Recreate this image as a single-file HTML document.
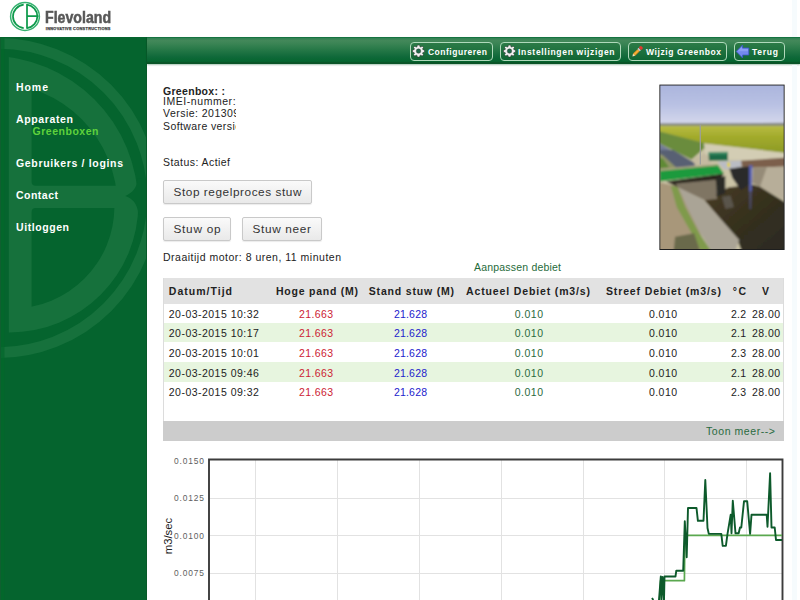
<!DOCTYPE html>
<html lang="nl">
<head>
<meta charset="utf-8">
<title>Flevoland Innovative Constructions - Greenbox</title>
<style>
html,body{margin:0;padding:0;}
body{width:800px;height:600px;overflow:hidden;background:#fff;position:relative;font-family:"Liberation Sans",sans-serif;}
.abs{position:absolute;}
.t{z-index:1;position:absolute;white-space:pre;line-height:14px;font-family:"Liberation Sans",sans-serif;}
#side{left:0;top:37px;width:147px;height:563px;background:#05642e;overflow:hidden;}
#side:after{content:"";position:absolute;right:0;top:0;width:1px;height:100%;background:#075a29;}
#bar{left:147px;top:37px;width:653px;height:27.2px;background:linear-gradient(#2f8152 0%,#43885a 10%,#3a8454 22%,#267847 45%,#10693a 72%,#05652f 90%,#0a5528 94%,#0a5528 100%);border-top:1px solid #167341;box-sizing:border-box;box-shadow:0 1px 1.5px rgba(10,85,40,.35);}
.tb{position:absolute;top:41.5px;height:19.5px;box-sizing:border-box;border:1px solid #b0d9bb;border-radius:4px;background:linear-gradient(#2c7b47,#0f6634);}
.btn{position:absolute;box-sizing:border-box;border:1px solid #c9c9c9;border-radius:2px;background:linear-gradient(#fafafa,#e9e9e9);box-shadow:0 1px 1px rgba(0,0,0,.08);}
#thead{left:163px;top:277.5px;width:621.3px;height:26px;background:#e2e2e2;}
.row{position:absolute;left:164px;width:620px;height:19.6px;}
.alt{background:#e7f5df;}
#tbox{left:163px;top:278px;width:621px;height:163px;box-sizing:border-box;border-left:1px solid #dcdcdc;border-right:1px solid #dcdcdc;}
#tfoot{left:163px;top:421px;width:621px;height:20px;background:#cccccc;}
#ylab{left:168px;top:536px;width:0;height:0;}
#ylab span{position:absolute;white-space:pre;font-size:11.3px;color:#222;transform:translate(-50%,-50%) rotate(-90deg);line-height:14px;}
</style>
</head>
<body>
<!-- header logo -->
<svg class="abs" style="left:0;top:0" width="120" height="37" viewBox="0 0 120 37">
<ellipse cx="25" cy="16.4" rx="14.4" ry="14" fill="none" stroke="#35b270" stroke-width="1.5"/>
<g fill="none" stroke="#0e9a4c" stroke-width="1.75">
<path d="M23.7 4.6A12.3 11.9 0 0 0 23.7 28.2"/>
<path d="M27 4.65A12.3 11.9 0 0 1 27 28.15"/>
<path d="M27 4.1V28.7M27 16.2H38.4"/>
</g>
</svg>
<span class="t" id="flevo" style="left:45.4px;top:9px;font-size:15.6px;font-weight:700;color:#585858;line-height:18px;transform-origin:0 0;transform:scaleX(.908);-webkit-text-stroke:.5px #585858">Flevoland</span>

<!-- sidebar -->
<div id="side" class="abs">
<svg class="abs" style="left:0;top:0" width="147" height="563" viewBox="0 37 147 563">
<defs>
<clipPath id="cu"><rect x="8.8" y="0" width="200" height="196"/></clipPath>
<clipPath id="cl"><rect x="8.8" y="196" width="200" height="400"/></clipPath>
<clipPath id="cuc"><rect x="31.6" y="60" width="200" height="125.8" rx="4"/></clipPath>
<clipPath id="clc"><rect x="31.6" y="208" width="200" height="125" rx="4"/></clipPath>
</defs>
<circle cx="-2" cy="198" r="154.6" fill="none" stroke="#16713c" stroke-width="10.8"/>
<circle cx="-10.6" cy="204.6" r="148.7" fill="#16713c" clip-path="url(#cu)"/>
<circle cx="9.6" cy="203.7" r="128.8" fill="#16713c" clip-path="url(#cl)"/>
<path d="M141.5 178 L137.4 179 C137.3 188 132 193 125.3 196 C132 198.6 137.6 203 138.2 214 L141.5 215Z" fill="#05642e"/>
<circle cx="-4.9" cy="205.4" r="122.2" fill="#05642e" clip-path="url(#cuc)"/>
<circle cx="12.3" cy="206.4" r="102.1" fill="#05642e" clip-path="url(#clc)"/>
<rect x="0" y="37" width="1" height="563" fill="#0f5f30"/><rect x="1" y="37" width="3.5" height="563" fill="#03682b" opacity=".7"/>
</svg>
</div>
<!-- toolbar -->
<div id="bar" class="abs"></div>
<div class="tb" style="left:409.5px;width:83.5px"></div>
<div class="tb" style="left:500px;width:121px"></div>
<div class="tb" style="left:627.5px;width:99.5px"></div>
<div class="tb" style="left:734px;width:50.5px"></div>
<svg class="abs" style="left:400px;top:38px" width="400" height="27" viewBox="400 38 400 27">
<g transform="translate(418.5 51.1)">
<g fill="#f1f1f1" stroke="#2b2b2b" stroke-width=".5" stroke-linejoin="round">
<path d="M-1.1-6 1.1-6 1.45-4.4 2.35-4 3.65-4.95 5-3.6 4.05-2.3 4.4-1.45 6-1.1 6 1.1 4.4 1.45 4.05 2.3 5 3.6 3.65 4.95 2.35 4.05 1.45 4.4 1.1 6-1.1 6-1.45 4.4-2.35 4.05-3.65 4.95-5 3.6-4.05 2.3-4.4 1.45-6 1.1-6-1.1-4.4-1.45-4.05-2.3-5-3.6-3.65-4.95-2.35-4-1.45-4.4Z"/>
</g>
<circle r="2.25" fill="#1d6a48" stroke="#2b2b2b" stroke-width=".4"/>
</g>
<g transform="translate(509.5 51.1)">
<g fill="#f1f1f1" stroke="#2b2b2b" stroke-width=".5" stroke-linejoin="round">
<path d="M-1.1-6 1.1-6 1.45-4.4 2.35-4 3.65-4.95 5-3.6 4.05-2.3 4.4-1.45 6-1.1 6 1.1 4.4 1.45 4.05 2.3 5 3.6 3.65 4.95 2.35 4.05 1.45 4.4 1.1 6-1.1 6-1.45 4.4-2.35 4.05-3.65 4.95-5 3.6-4.05 2.3-4.4 1.45-6 1.1-6-1.1-4.4-1.45-4.05-2.3-5-3.6-3.65-4.95-2.35-4-1.45-4.4Z"/>
</g>
<circle r="2.25" fill="#1d6a48" stroke="#2b2b2b" stroke-width=".4"/>
</g>
<!-- pencil -->
<g transform="translate(632.3 56.5) rotate(-45)">
<path d="M0 0L2.6-1.5V1.5Z" fill="#f3e2b8"/>
<path d="M0 0L.9-.5V.5Z" fill="#444"/>
<rect x="2.6" y="-1.5" width="6.3" height="3" fill="#e8931f"/>
<rect x="2.6" y="-.5" width="6.3" height="1" fill="#f5b946"/>
<rect x="8.9" y="-1.6" width="1.7" height="3.2" fill="#c9c9c9"/>
<rect x="10.6" y="-1.9" width="3.2" height="3.8" rx="1.5" fill="#e0382e"/>
</g>
<!-- arrow -->
<path d="M736.2 51.5L742.6 45V48H748.8V55H742.6V58Z" fill="#7389ee" stroke="#3c58c8" stroke-width=".8" stroke-linejoin="round"/>
<path d="M737.6 51.3L742 47V49H748V51.3Z" fill="#93a7f7" opacity=".7"/>
</svg>

<div class="abs" id="cover" style="left:235.8px;top:80px;width:120px;height:56px;background:#fff;z-index:5"></div>
<div class="abs" style="left:792px;top:0;width:5px;height:37px;background:#f6fbfd"></div><div class="abs" style="left:792px;top:65px;width:5px;height:535px;background:#f6fbfd"></div>
<!-- buttons -->
<div class="btn" style="left:163px;top:180px;width:149px;height:24px"></div>
<div class="btn" style="left:163px;top:217px;width:68px;height:24px"></div>
<div class="btn" style="left:242px;top:217px;width:80px;height:24px"></div>
<!-- table -->
<div id="thead" class="abs"></div>
<div class="row alt" style="top:322.8px"></div>
<div class="row alt" style="top:362px"></div>
<div id="tbox" class="abs"></div>
<div id="tfoot" class="abs"></div>
<!-- photo -->
<svg class="abs" style="left:659px;top:84px" width="126" height="166" viewBox="659 84 126 166">
<defs>
<linearGradient id="sky" x1="0" y1="0" x2="0" y2="1"><stop offset="0" stop-color="#a7b2dc"/><stop offset=".55" stop-color="#b9c1e3"/><stop offset="1" stop-color="#d6d9ec"/></linearGradient>
<linearGradient id="fld" x1="0" y1="0" x2="0" y2="1"><stop offset="0" stop-color="#b9bd45"/><stop offset=".4" stop-color="#a3ab2c"/><stop offset="1" stop-color="#8c9a26"/></linearGradient>
<linearGradient id="wat" x1="0" y1="0" x2="1" y2="1"><stop offset="0" stop-color="#4a3c22"/><stop offset=".5" stop-color="#35301f"/><stop offset="1" stop-color="#2b2a22"/></linearGradient>
<filter id="bl" x="-5%" y="-5%" width="110%" height="110%"><feGaussianBlur stdDeviation=".9"/></filter>
<clipPath id="pc"><rect x="660.3" y="85.5" width="123.4" height="163.6"/></clipPath>
</defs>
<rect x="659.4" y="84.6" width="125.2" height="165.4" fill="#1e1e1e"/>
<g clip-path="url(#pc)"><g filter="url(#bl)">
<rect x="655" y="80" width="135" height="45" fill="url(#sky)"/>
<rect x="655" y="124" width="135" height="130" fill="#cac3a6"/>
<polygon points="656.0,125.2 788.0,125.2 788.0,153.3 703.9,143.4 656.0,130.8" fill="url(#fld)"/>
<polygon points="656.0,123.3 788.0,122.8 788.0,125.7 656.0,125.7" fill="#85887f"/>
<polygon points="656.0,130.5 703.9,143.1 705.5,147.2 691.5,159.6 656.0,141.7" fill="#6b8c3c"/>
<polygon points="656.0,141.7 691.5,161.2 694.8,165.3 672.5,171.9 656.0,154.6" fill="#727c96"/>
<polygon points="659.5,150.0 673.3,150.0 697.6,164.7 676.8,168.2 659.5,153.5" fill="#586073"/>
<polygon points="656.0,153.5 662.9,155.2 676.8,168.2 656.0,171.7" fill="#8f9466"/>
<polygon points="656.0,156.9 662.9,158.7 669.0,167.3 656.0,169.1" fill="#5f8a35"/>
<polygon points="691.5,159.6 705.5,153.0 710.5,159.6 710.5,170.0 695.6,165.3" fill="#c4baa0"/>
<polygon points="703.9,143.4 788.0,153.3 788.0,161.2 728.6,159.6 705.5,154.6" fill="#d3cdb4"/>
<polygon points="740.9,160.7 783.4,157.8 787.7,157.8 787.7,166.5 753.1,167.7 741.8,166.5" fill="#7b5f4c"/>
<polygon points="753.1,167.7 787.7,166.5 787.7,202.0 760.0,186.7" fill="#b7ae99"/>
<polygon points="753.1,167.7 766.9,167.3 760.0,186.7 752.2,182.9" fill="#958b78"/>
<polygon points="704.5,200.3 728.8,187.3 753.1,184.7 760.0,186.7 787.7,203.7 787.7,254.0 742.7,254.0 737.5,240.1" fill="url(#wat)"/>
<polygon points="721.9,196.8 730.5,195.4 734.0,207.2 725.3,208.9" fill="#5a554c"/>
<polygon points="656.0,181.5 678.5,186.7 690.7,207.2 708.0,254.0 656.0,254.0" fill="#a8977a"/>
<polygon points="670.7,185.5 677.7,187.3 685.5,207.2 699.3,233.2 713.2,254.0 702.8,254.0 690.7,231.5 676.8,207.2" fill="#7f9a4c"/>
<polygon points="675.1,236.7 694.1,233.2 701.1,254.0 673.3,254.0" fill="#6b6a4c"/>
<polygon points="678.5,187.3 703.7,199.7 739.2,240.1 734.0,254.0 713.2,254.0 699.3,231.5 687.2,207.2" fill="#aaa496"/>
<polygon points="666.4,181.5 723.9,173.4 715.8,185.5 676.8,186.7" fill="#2b281f"/>
<polygon points="675.1,183.8 715.8,179.8 717.0,198.9 704.9,200.3 678.5,187.4" fill="#7f7563"/>
<polygon points="715.8,177.7 725.3,176.0 725.3,193.3 716.7,196.8" fill="#2a2a26"/>
<polygon points="728.8,167.3 750.5,166.5 751.3,183.8 740.9,190.2 732.3,177.7" fill="#2c2c2a"/>
<polygon points="717.5,161.8 741.3,160.4 741.3,167.0 724.5,169.4" fill="#b9bcc4"/>
<rect x="727.4" y="162.5" width="2.6" height="4.5" fill="#e6d43a"/>
<polygon points="749.1,165.3 752.4,165.3 751.7,191.6 749.2,191.6" fill="#5862b4"/>
<polygon points="749.2,191.6 751.7,191.6 751.0,208.9 749.6,208.9" fill="#55588a" opacity=".7"/>
<polygon points="659.5,169.6 717.5,164.4 723.9,173.4 659.5,181.5" fill="#1f9a3d"/>
<polygon points="659.5,168.7 717.5,163.9 718.0,165.6 659.5,171.1" fill="#a9a27f"/>
<polygon points="708.5,153.1 727.9,152.8 727.9,160.4 708.9,160.7" fill="#1b6a47"/>
<polygon points="708.5,152.1 727.9,151.7 727.9,154.2 708.5,154.5" fill="#3f8f68"/>
</g>
<rect x="699.6" y="124.6" width="1.4" height="40" fill="#9b9d9b" opacity=".9"/>
</g>
</svg>
<!-- chart -->
<svg class="abs" style="left:0;top:441px" width="800" height="159" viewBox="0 441 800 159">
<g stroke="#e2e2e2" stroke-width="1" fill="none">
<path d="M255.5 459V600M337.5 459V600M419.5 459V600M501.5 459V600M583.5 459V600M664.5 459V600M746.5 459V600"/>
<path d="M209 498.5H782M209 535.5H782M209 573.5H782"/>
</g>
<path d="M209 600V459.5H782.5V600" stroke="#3c3c3c" stroke-width="1.9" fill="none"/>
<path id="lg" d="M659.6 600 L660.6 580.7 L684.4 580.7 L684.9 535.3 L782 535.3" stroke="#5aa84f" stroke-width="1.7" fill="none" stroke-linejoin="round"/>
<path id="dg" d="M652 598 L653.3 600 M659 600 L660.8 576.5 L661.5 600 L662.5 577 L664 600 L664.5 576.5 L675.5 576.5 L676.3 570.7 L683.2 570.7 L684.8 521.3 L686.7 557.3 L688 508 L696.5 508 L697.9 520.8 L703.5 520.8 L705.3 480 L707.5 528 L708.8 533.9 L721.3 533.9 L722.7 545.9 L725.9 545.9 L727.5 533.9 L730.7 514.7 L731.5 533.3 L732.8 500.8 L735.5 533.3 L738.7 533.3 L740 527.5 L741.3 527.5 L744 501.3 L747.2 501.3 L750.1 533.9 L751.5 514.7 L766.7 514.7 L767.5 526.7 L770.1 473.3 L771.5 527.5 L774.7 527.5 L776 540 L782 540" stroke="#0d5a2b" stroke-width="1.9" fill="none" stroke-linejoin="round"/>
</svg>

<div id="ylab" class="abs"><span>m3/sec</span></div>
<!-- texts -->
<span class="t" style="left:16.0px;top:80.36px;font-size:10.5px;font-weight:700;color:#fff;letter-spacing:0.938px;">Home</span>
<span class="t" style="left:16.0px;top:112.36px;font-size:10.5px;font-weight:700;color:#fff;letter-spacing:0.633px;">Apparaten</span>
<span class="t" style="left:32.5px;top:124.36px;font-size:10.5px;font-weight:700;color:#5fd23c;letter-spacing:0.524px;">Greenboxen</span>
<span class="t" style="left:16.0px;top:156.36px;font-size:10.5px;font-weight:700;color:#fff;letter-spacing:0.660px;">Gebruikers / logins</span>
<span class="t" style="left:16.0px;top:188.36px;font-size:10.5px;font-weight:700;color:#fff;letter-spacing:0.484px;">Contact</span>
<span class="t" style="left:16.0px;top:220.36px;font-size:10.5px;font-weight:700;color:#fff;letter-spacing:0.572px;">Uitloggen</span>
<span class="t" style="left:427.9px;top:44.95px;font-size:8.5px;font-weight:700;color:#fff;letter-spacing:0.520px;">Configureren</span>
<span class="t" style="left:518.0px;top:44.95px;font-size:8.5px;font-weight:700;color:#fff;letter-spacing:0.692px;">Instellingen wijzigen</span>
<span class="t" style="left:646.0px;top:44.95px;font-size:8.5px;font-weight:700;color:#fff;letter-spacing:0.606px;">Wijzig Greenbox</span>
<span class="t" style="left:751.9px;top:44.95px;font-size:8.5px;font-weight:700;color:#fff;letter-spacing:0.779px;">Terug</span>
<span class="t" style="left:163.0px;top:83.86px;font-size:10.5px;font-weight:700;color:#222;letter-spacing:0.306px;">Greenbox: :</span>
<span class="t" style="left:163.0px;top:94.36px;font-size:10.5px;font-weight:400;color:#222;letter-spacing:0.553px;">IMEI-nummer:</span>
<span class="t" style="left:163.0px;top:106.36px;font-size:10.5px;font-weight:400;color:#222;letter-spacing:0.472px;">Versie: 201309</span>
<span class="t" style="left:163.0px;top:118.56px;font-size:10.5px;font-weight:400;color:#222;letter-spacing:0.402px;">Software versie</span>
<span class="t" style="left:163.0px;top:154.86px;font-size:10.5px;font-weight:400;color:#222;letter-spacing:0.439px;">Status: Actief</span>
<span class="t" style="left:163.0px;top:250.36px;font-size:10.5px;font-weight:400;color:#222;letter-spacing:0.503px;">Draaitijd motor: 8 uren, 11 minuten</span>
<span class="t" style="left:173.5px;top:185.11px;font-size:11.8px;font-weight:400;color:#333;letter-spacing:0.563px;">Stop regelproces stuw</span>
<span class="t" style="left:173.5px;top:221.71px;font-size:11.8px;font-weight:400;color:#333;letter-spacing:0.727px;">Stuw op</span>
<span class="t" style="left:252.5px;top:221.71px;font-size:11.8px;font-weight:400;color:#333;letter-spacing:0.672px;">Stuw neer</span>
<span class="t" style="left:474.0px;top:259.86px;font-size:10.5px;font-weight:400;color:#1f6b3a;letter-spacing:0.195px;">Aanpassen debiet</span>
<span class="t" style="left:168.8px;top:283.86px;font-size:10.5px;font-weight:700;color:#222;letter-spacing:1.015px;">Datum/Tijd</span>
<span class="t" style="left:276.0px;top:283.86px;font-size:10.5px;font-weight:700;color:#222;letter-spacing:0.758px;">Hoge pand (M)</span>
<span class="t" style="left:368.8px;top:283.86px;font-size:10.5px;font-weight:700;color:#222;letter-spacing:0.810px;">Stand stuw (M)</span>
<span class="t" style="left:466.0px;top:283.86px;font-size:10.5px;font-weight:700;color:#222;letter-spacing:0.861px;">Actueel Debiet (m3/s)</span>
<span class="t" style="left:606.0px;top:283.86px;font-size:10.5px;font-weight:700;color:#222;letter-spacing:0.862px;">Streef Debiet (m3/s)</span>
<span class="t" style="left:732.8px;top:283.86px;font-size:10.5px;font-weight:700;color:#222;letter-spacing:1.403px;">°C</span>
<span class="t" style="left:762.0px;top:283.86px;font-size:10.5px;font-weight:700;color:#222;letter-spacing:-0.016px;">V</span>
<span class="t" style="left:168.8px;top:306.86px;font-size:10.5px;font-weight:400;color:#222;letter-spacing:0.473px;">20-03-2015 10:32</span>
<span class="t" style="left:299.0px;top:306.86px;font-size:10.5px;font-weight:400;color:#cc2233;letter-spacing:0.375px;">21.663</span>
<span class="t" style="left:394.0px;top:306.86px;font-size:10.5px;font-weight:400;color:#2222cc;letter-spacing:0.175px;">21.628</span>
<span class="t" style="left:514.8px;top:306.86px;font-size:10.5px;font-weight:400;color:#2a6a40;letter-spacing:0.480px;">0.010</span>
<span class="t" style="left:649.0px;top:306.86px;font-size:10.5px;font-weight:400;color:#222;letter-spacing:0.430px;">0.010</span>
<span class="t" style="left:731.0px;top:306.86px;font-size:10.5px;font-weight:400;color:#222;letter-spacing:0.195px;">2.2</span>
<span class="t" style="left:752.0px;top:306.86px;font-size:10.5px;font-weight:400;color:#222;letter-spacing:0.430px;">28.00</span>
<span class="t" style="left:168.8px;top:326.46px;font-size:10.5px;font-weight:400;color:#222;letter-spacing:0.473px;">20-03-2015 10:17</span>
<span class="t" style="left:299.0px;top:326.46px;font-size:10.5px;font-weight:400;color:#cc2233;letter-spacing:0.375px;">21.663</span>
<span class="t" style="left:394.0px;top:326.46px;font-size:10.5px;font-weight:400;color:#2222cc;letter-spacing:0.175px;">21.628</span>
<span class="t" style="left:514.8px;top:326.46px;font-size:10.5px;font-weight:400;color:#2a6a40;letter-spacing:0.480px;">0.010</span>
<span class="t" style="left:649.0px;top:326.46px;font-size:10.5px;font-weight:400;color:#222;letter-spacing:0.430px;">0.010</span>
<span class="t" style="left:731.0px;top:326.46px;font-size:10.5px;font-weight:400;color:#222;letter-spacing:0.195px;">2.1</span>
<span class="t" style="left:752.0px;top:326.46px;font-size:10.5px;font-weight:400;color:#222;letter-spacing:0.430px;">28.00</span>
<span class="t" style="left:168.8px;top:346.06px;font-size:10.5px;font-weight:400;color:#222;letter-spacing:0.473px;">20-03-2015 10:01</span>
<span class="t" style="left:299.0px;top:346.06px;font-size:10.5px;font-weight:400;color:#cc2233;letter-spacing:0.375px;">21.663</span>
<span class="t" style="left:394.0px;top:346.06px;font-size:10.5px;font-weight:400;color:#2222cc;letter-spacing:0.175px;">21.628</span>
<span class="t" style="left:514.8px;top:346.06px;font-size:10.5px;font-weight:400;color:#2a6a40;letter-spacing:0.480px;">0.010</span>
<span class="t" style="left:649.0px;top:346.06px;font-size:10.5px;font-weight:400;color:#222;letter-spacing:0.430px;">0.010</span>
<span class="t" style="left:731.0px;top:346.06px;font-size:10.5px;font-weight:400;color:#222;letter-spacing:0.195px;">2.3</span>
<span class="t" style="left:752.0px;top:346.06px;font-size:10.5px;font-weight:400;color:#222;letter-spacing:0.430px;">28.00</span>
<span class="t" style="left:168.8px;top:365.66px;font-size:10.5px;font-weight:400;color:#222;letter-spacing:0.473px;">20-03-2015 09:46</span>
<span class="t" style="left:299.0px;top:365.66px;font-size:10.5px;font-weight:400;color:#cc2233;letter-spacing:0.375px;">21.663</span>
<span class="t" style="left:394.0px;top:365.66px;font-size:10.5px;font-weight:400;color:#2222cc;letter-spacing:0.175px;">21.628</span>
<span class="t" style="left:514.8px;top:365.66px;font-size:10.5px;font-weight:400;color:#2a6a40;letter-spacing:0.480px;">0.010</span>
<span class="t" style="left:649.0px;top:365.66px;font-size:10.5px;font-weight:400;color:#222;letter-spacing:0.430px;">0.010</span>
<span class="t" style="left:731.0px;top:365.66px;font-size:10.5px;font-weight:400;color:#222;letter-spacing:0.195px;">2.1</span>
<span class="t" style="left:752.0px;top:365.66px;font-size:10.5px;font-weight:400;color:#222;letter-spacing:0.430px;">28.00</span>
<span class="t" style="left:168.8px;top:385.26px;font-size:10.5px;font-weight:400;color:#222;letter-spacing:0.473px;">20-03-2015 09:32</span>
<span class="t" style="left:299.0px;top:385.26px;font-size:10.5px;font-weight:400;color:#cc2233;letter-spacing:0.375px;">21.663</span>
<span class="t" style="left:394.0px;top:385.26px;font-size:10.5px;font-weight:400;color:#2222cc;letter-spacing:0.175px;">21.628</span>
<span class="t" style="left:514.8px;top:385.26px;font-size:10.5px;font-weight:400;color:#2a6a40;letter-spacing:0.480px;">0.010</span>
<span class="t" style="left:649.0px;top:385.26px;font-size:10.5px;font-weight:400;color:#222;letter-spacing:0.430px;">0.010</span>
<span class="t" style="left:731.0px;top:385.26px;font-size:10.5px;font-weight:400;color:#222;letter-spacing:0.195px;">2.3</span>
<span class="t" style="left:752.0px;top:385.26px;font-size:10.5px;font-weight:400;color:#222;letter-spacing:0.430px;">28.00</span>
<span class="t" style="left:706.0px;top:423.86px;font-size:10.5px;font-weight:400;color:#2a6a40;letter-spacing:0.570px;">Toon meer--&gt;</span>
<span class="t" style="left:174.0px;top:453.69px;font-size:8.4px;font-weight:400;color:#5e5e5e;letter-spacing:0.875px;">0.0150</span>
<span class="t" style="left:174.0px;top:491.19px;font-size:8.4px;font-weight:400;color:#5e5e5e;letter-spacing:0.875px;">0.0125</span>
<span class="t" style="left:174.0px;top:528.69px;font-size:8.4px;font-weight:400;color:#5e5e5e;letter-spacing:0.875px;">0.0100</span>
<span class="t" style="left:174.0px;top:566.19px;font-size:8.4px;font-weight:400;color:#5e5e5e;letter-spacing:0.875px;">0.0075</span>
<span class="t" style="left:45.8px;top:21.55px;font-size:3.9px;font-weight:700;color:#444;letter-spacing:0.277px;-webkit-text-stroke:.25px #444;">INNOVATIVE CONSTRUCTIONS</span>
</body>
</html>
